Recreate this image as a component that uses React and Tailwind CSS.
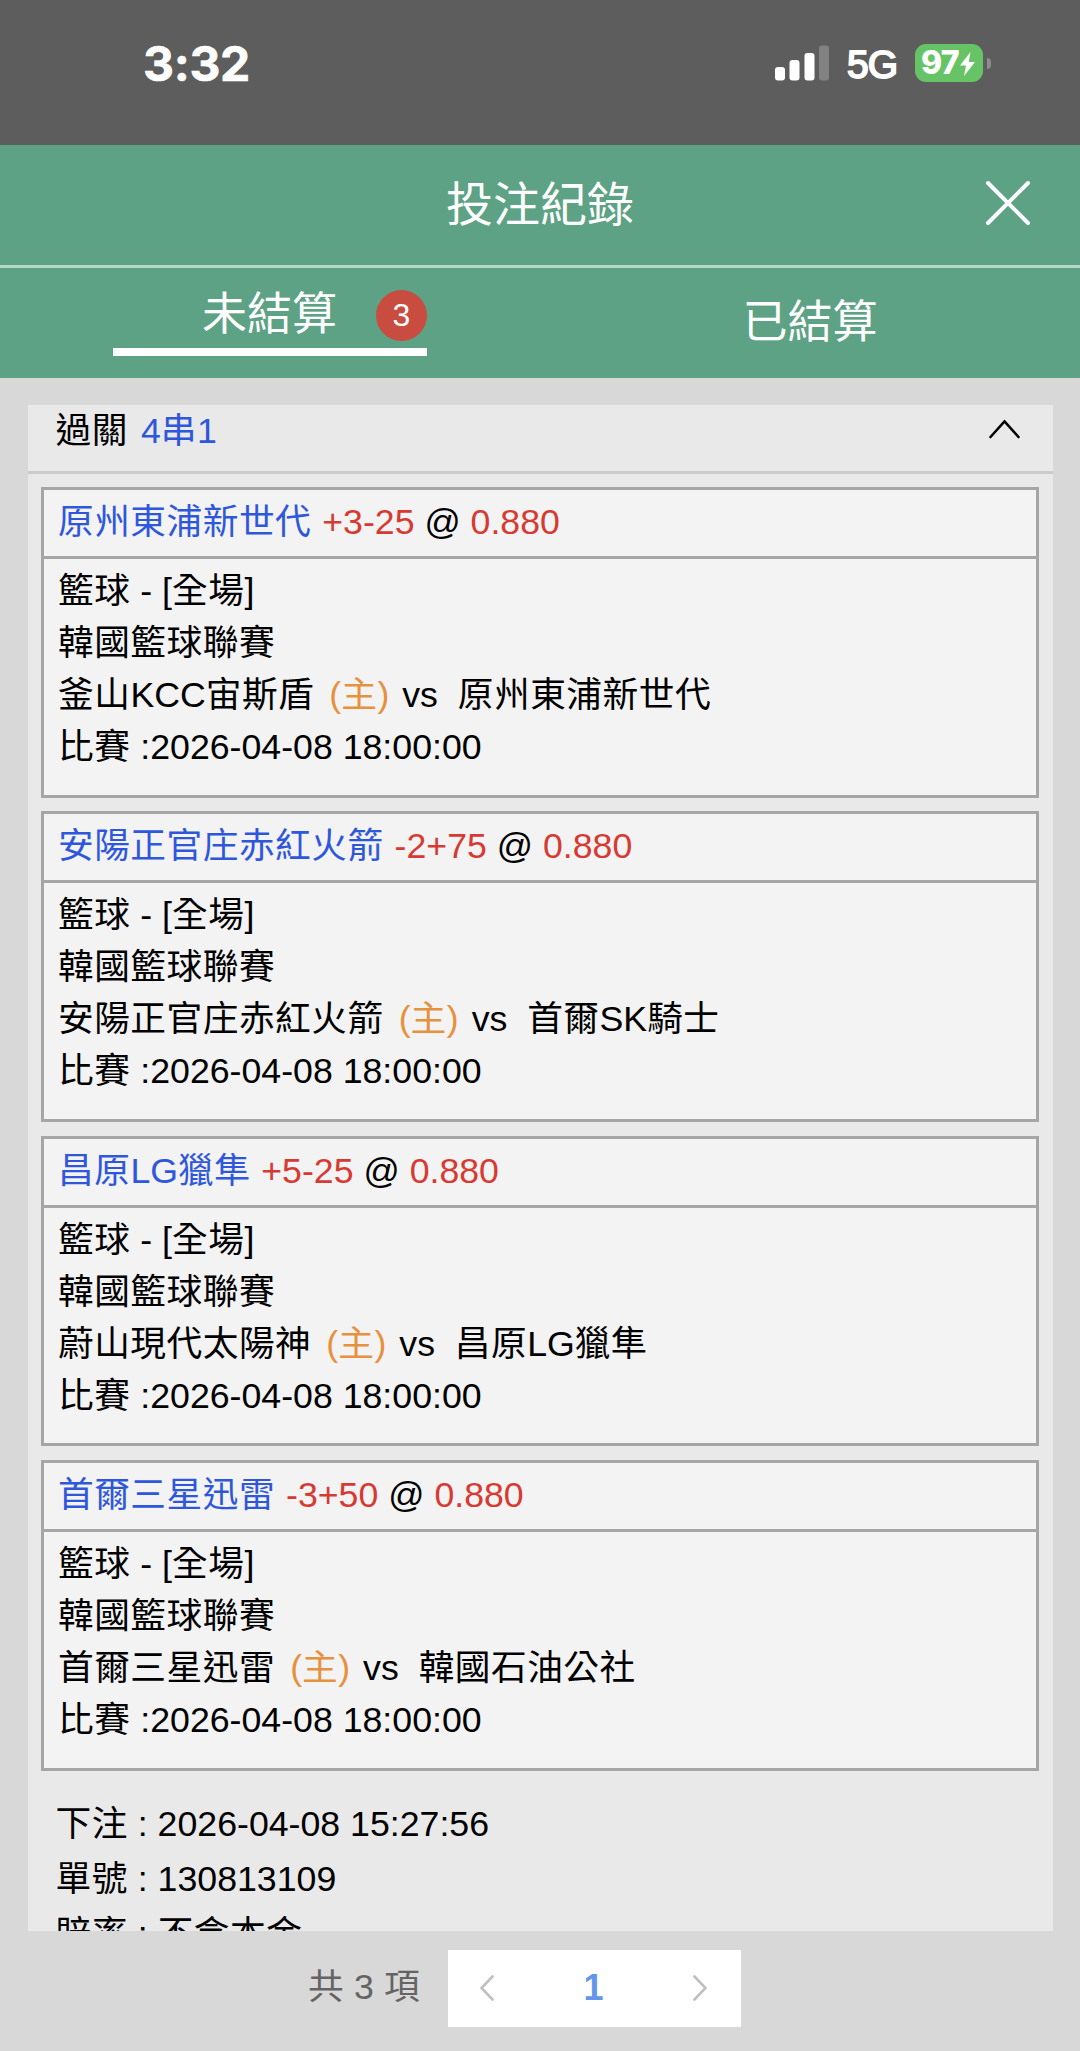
const bets = [
  { pick: '原州東浦新世代', line: '+3-25', home: '釜山KCC宙斯盾', away: '原州東浦新世代' },
  { pick: '安陽正官庄赤紅火箭', line: '-2+75', home: '安陽正官庄赤紅火箭', away: '首爾SK騎士' },
  { pick: '昌原LG獵隼', line: '+5-25', home: '蔚山現代太陽神', away: '昌原LG獵隼' },
  { pick: '首爾三星迅雷', line: '-3+50', home: '首爾三星迅雷', away: '韓國石油公社' },
];

/* Gives runs of Chinese characters a slightly wider pitch than Latin text. */
function T({ children }) {
  return children
    .split(/([\u4e00-\u9fff]+)/)
    .filter(Boolean)
    .map((part, i) =>
      /[\u4e00-\u9fff]/.test(part) ? (
        <span key={i} className="tracking-[0.5px]">{part}</span>
      ) : (
        <span key={i}>{part}</span>
      )
    );
}

function StatusBar() {
  return (
    <div className="flex h-[145px] items-start justify-between bg-[#5d5d5d] pl-[143px] pr-[89px] text-white font-['Inter',sans-serif]">
      <div className="mt-[34px] text-[48px] leading-[60px] font-bold tracking-[-0.3px] [-webkit-text-stroke:0.6px_white]">3:32</div>
      <div className="mt-[44px] flex h-[38px] items-center">
        <svg width="54" height="36" viewBox="0 0 54 36" fill="#fff">
          <rect x="0" y="22" width="10" height="13.5" rx="3" />
          <rect x="14.5" y="15" width="10" height="20.5" rx="3" />
          <rect x="29.5" y="8" width="10" height="27.5" rx="3" />
          <rect x="44" y="0.5" width="10" height="35" rx="3" fill="#828282" />
        </svg>
        <div className="ml-[18px] mt-[4px] w-[52px] font-['Liberation_Sans',sans-serif] text-[39px] leading-[38px] font-medium tracking-[-1px] [-webkit-text-stroke:1.8px_white]">5G</div>
        <div className="ml-[16px] flex h-[38px] w-[68px] items-center rounded-[11px] bg-[#67c466] pl-[6px]">
          <span className="text-[32px] leading-[38px] font-extrabold tracking-[-0.8px]">97</span>
          <svg width="17" height="26" viewBox="0 0 17 26" className="mt-[2px] shrink-0" fill="#fff">
            <path d="M11.5 1 1 14.5h6L5 25 16 11h-6.2z" />
          </svg>
        </div>
        <div className="ml-[4px] h-[11px] w-[4px] rounded-r-full bg-[#8c8c8c]" />
      </div>
    </div>
  );
}

function BetCard({ bet }) {
  return (
    <article className="h-[310.7px] border-[3px] border-[#a6a6a6] bg-[#f3f3f3]">
      <h2 className="h-[69px] border-b-[3px] border-[#a6a6a6] pl-[14px] leading-[65px] whitespace-pre">
        <span className="mr-px text-[#2f57dc]"><T>{bet.pick}</T></span>{' '}
        <span className="text-[#d63a32]">{bet.line}</span>
        {' @ '}
        <span className="text-[#d63a32]">0.880</span>
      </h2>
      <div className="pt-[6px] pl-[14px] leading-[52px] whitespace-pre">
        <p><T>籃球 - [全場]</T></p>
        <p><T>韓國籃球聯賽</T></p>
        <p>
          <T>{bet.home}</T>
          <span className="ml-[15px] mr-[13px] text-[#e6913d]"><T>(主)</T></span>
          {'vs  '}
          <T>{bet.away}</T>
        </p>
        <p><T>比賽 :2026-04-08 18:00:00</T></p>
      </div>
    </article>
  );
}

export default function App() {
  return (
    <div className={"flex h-[2051px] w-[1080px] flex-col overflow-hidden bg-[#d8d8d8] text-[35.7px] text-black font-['Liberation_Sans','Noto_Sans_CJK_TC',sans-serif]"}>
      <StatusBar />
      <header className="relative flex h-[120px] shrink-0 items-center justify-center bg-[#5da285] text-white">
        <h1 className="text-[47px] leading-[60px]">投注紀錄</h1>
        <svg className="absolute top-[35px] right-[49px]" width="46" height="46" viewBox="0 0 46 46" fill="none" stroke="#fff" strokeWidth="4" strokeLinecap="round">
          <path d="M3 3l40 40M43 3L3 43" />
        </svg>
      </header>
      <nav className="grid h-[113px] shrink-0 grid-cols-2 border-t-[3px] border-[#b5d8ca] bg-[#5da285] text-[45px] text-white">
        <div className="flex justify-center">
          <div className="mt-[18px] flex h-[70px] w-[314px] items-start justify-end border-b-[8px] border-white">
            <span className="mt-px mr-[39px] leading-[56px]">未結算</span>
            <span className="mt-[4px] h-[51px] w-[51px] rounded-full bg-[#c94c40] text-center text-[32px] leading-[51px]">3</span>
          </div>
        </div>
        <div className="pt-[27px] text-center leading-[56px]">已結算</div>
      </nav>
      <main className="mx-[27.5px] mt-[27px] flex h-[1525.5px] shrink-0 flex-col overflow-hidden bg-[#e9e9e9]">
        <div className="flex h-[69px] shrink-0 items-start justify-between border-b-[3px] border-[#cbcbcb] pl-[28px] pr-[33px]">
          <div className="leading-[53px] whitespace-pre">
            <T>過關</T>
            <span className="ml-[13px] text-[#2f57dc]"><T>4串1</T></span>
          </div>
          <svg className="mt-[14px]" width="31" height="20" viewBox="0 0 31 20" fill="none" stroke="#000" strokeWidth="2.6" strokeLinecap="round">
            <path d="M1.5 18 15.5 2.5 29.5 18" />
          </svg>
        </div>
        <div className="mx-[13.5px] mt-[13px] flex flex-col gap-[13.6px]">
          {bets.map((bet) => <BetCard key={bet.pick} bet={bet} />)}
        </div>
        <div className="mt-[26px] pl-[28px] leading-[55px] whitespace-pre">
          <p><T>下注 : 2026-04-08 15:27:56</T></p>
          <p><T>單號 : 130813109</T></p>
          <p><T>賠率 : 不含本金</T></p>
        </div>
      </main>
      <footer className="mt-[19px] flex items-center pl-[308px]">
        <span className="w-[140px] text-[#646464] whitespace-pre"><T>共 3 項</T></span>
        <div className="flex h-[77px] w-[293px] items-center justify-between bg-white pr-[34px] pl-[32px]">
          <svg width="14" height="26" viewBox="0 0 14 26" fill="none" stroke="#c0c0c0" strokeWidth="2.6" strokeLinecap="round"><path d="M12.5 1.5 1.5 13l11 11.5" /></svg>
          <span className="text-[36px] font-bold text-[#6396ea]">1</span>
          <svg width="14" height="26" viewBox="0 0 14 26" fill="none" stroke="#c0c0c0" strokeWidth="2.6" strokeLinecap="round"><path d="M1.5 1.5 12.5 13l-11 11.5" /></svg>
        </div>
      </footer>
    </div>
  );
}
